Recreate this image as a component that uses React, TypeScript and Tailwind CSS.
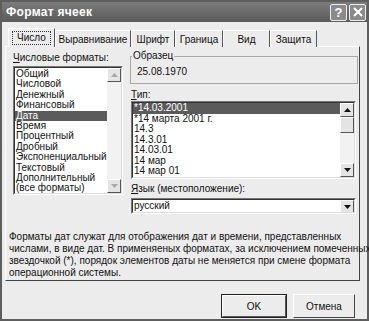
import React from "react";

const formats = [
  "Общий",
  "Числовой",
  "Денежный",
  "Финансовый",
  "Дата",
  "Время",
  "Процентный",
  "Дробный",
  "Экспоненциальный",
  "Текстовый",
  "Дополнительный",
  "(все форматы)",
];

const types = [
  "*14.03.2001",
  "*14 марта 2001 г.",
  "14.3",
  "14.3.01",
  "14.03.01",
  "14 мар",
  "14 мар 01",
];

const tabs = ["Выравнивание", "Шрифт", "Граница", "Вид", "Защита"];
const tabWidths = ["w-[76px]", "w-[44px]", "w-[48px]", "w-[47px]", "w-[47px]"];

// стрелка для полос прокрутки
const Arrow = ({ up, dim }: { up?: boolean; dim?: boolean }) => (
  <svg width="7" height="4" viewBox="0 0 7 4" className={up ? "" : "rotate-180"}>
    <path d="M0 4 L3.5 0 L7 4 Z" fill={dim ? "#a8a8a8" : "#111"} />
  </svg>
);

const ScrollBtn = ({ up, dim }: { up?: boolean; dim?: boolean }) => (
  <div className="h-[14px] w-[14px] shrink-0 flex items-center justify-center bg-[#e4e4e4] border border-t-white border-l-white border-r-[#555] border-b-[#555]">
    <Arrow up={up} dim={dim} />
  </div>
);

const Sunken = ({ className, children }: { className?: string; children?: React.ReactNode }) => (
  <div className={`border border-t-[#777] border-l-[#777] border-r-white border-b-white ${className ?? ""}`}>
    <div className="h-full w-full border border-t-[#333] border-l-[#333] border-r-[#ddd] border-b-[#ddd] bg-white flex overflow-hidden">
      {children}
    </div>
  </div>
);

export default function App() {
  return (
    <div
      className="w-[369px] h-[321px] bg-[#5e5e5e] p-[2px] flex flex-col text-[#111]"
      style={{ fontFamily: '"Liberation Sans", Arial, sans-serif' }}
    >
      {/* заголовок */}
      <div className="h-[20px] shrink-0 flex items-center justify-between pl-[4px] pr-[1px] bg-gradient-to-b from-[#7c7c7c] to-[#5a5a5a]">
        <span className="text-white font-bold text-[12px] tracking-[0.3px]">Формат ячеек</span>
        <div className="flex gap-[2px]">
          <div className="h-[17px] w-[17px] rounded-[2px] border border-[#eee] bg-[#8a8a8a] flex items-center justify-center text-white font-bold text-[13px] leading-none">?</div>
          <div className="h-[17px] w-[17px] rounded-[2px] border border-[#eee] bg-[#8a8a8a] flex items-center justify-center">
            <svg width="10" height="10" viewBox="0 0 10 10">
              <path d="M1 1 L9 9 M9 1 L1 9" stroke="#fff" strokeWidth="2" />
            </svg>
          </div>
        </div>
      </div>

      <div className="flex-1 bg-[#ececec] px-[3px] pt-[6px] flex flex-col">
        {/* вкладки */}
        <div className="flex items-end pl-[3px] h-[19px] relative z-10">
          <div className="h-[19px] w-[47px] bg-[#ececec] border border-b-0 border-t-white border-l-white border-r-[#555] flex items-center justify-center">
            <span className="border border-dotted border-[#333] px-[4px] text-[10px] leading-[12px]">Число</span>
          </div>
          {tabs.map((t, i) => (
            <div
              key={t}
              className={`${tabWidths[i]} h-[17px] bg-[#ececec] border border-b-0 border-t-white border-l-white border-r-[#555] flex items-center justify-center text-[10px]`}
            >
              {t}
            </div>
          ))}
        </div>

        {/* панель */}
        <div className="h-[235px] w-[355px] border border-t-white border-l-white border-r-[#444] border-b-[#444] bg-[#ececec] flex flex-col -mt-px">
          <div className="flex pt-[4px]">
            {/* левая колонка */}
            <div className="ml-[7px] w-[110px] flex flex-col">
              <span className="text-[10px] leading-[13px] h-[15px]">
                <u>Ч</u>исловые форматы:
              </span>
              <Sunken className="h-[129px] w-[110px]">
                <div className="flex-1 flex flex-col pt-px text-[10px] leading-[10.4px]">
                  {formats.map((f) => (
                    <div
                      key={f}
                      className={`pl-[1px] h-[10.4px] whitespace-nowrap ${f === "Дата" ? "bg-[#5b5b5b] text-white" : ""}`}
                    >
                      {f}
                    </div>
                  ))}
                </div>
                <div className="w-[14px] bg-[#f2f2f2] flex flex-col justify-between">
                  <ScrollBtn up dim />
                  <ScrollBtn dim />
                </div>
              </Sunken>
            </div>

            {/* правая колонка */}
            <div className="ml-[7px] w-[228px] flex flex-col">
              <div className="relative border border-[#a8a8a8] h-[28px] mt-[5px] flex items-end pl-[6px] pb-[5px]">
                <span className="absolute -top-[8px] left-[1px] bg-[#ececec] px-[1px] text-[10px] leading-[13px]">Образец</span>
                <span className="text-[10px] leading-[13px]">25.08.1970</span>
              </div>
              <span className="mt-[4px] ml-px text-[10px] leading-[13px] h-[13px]">
                <u>Т</u>ип:
              </span>
              <Sunken className="h-[78px] w-[225px] ml-px">
                <div className="flex-1 flex flex-col text-[10px] leading-[10.5px]">
                  {types.map((t, i) => (
                    <div
                      key={t}
                      className={`pl-[1px] h-[10.5px] whitespace-nowrap ${i === 0 ? "bg-[#5b5b5b] text-white" : ""}`}
                    >
                      {t}
                    </div>
                  ))}
                </div>
                <div className="w-[14px] bg-[#f2f2f2] flex flex-col">
                  <ScrollBtn up />
                  <div className="h-[16px] w-[14px] bg-[#e4e4e4] border border-t-white border-l-white border-r-[#555] border-b-[#555]" />
                  <div className="flex-1" />
                  <ScrollBtn />
                </div>
              </Sunken>
              <span className="mt-[3px] ml-px text-[10px] leading-[13px] h-[16px]">
                <u>Я</u>зык (местоположение):
              </span>
              <Sunken className="h-[16px] w-[225px] ml-px">
                <div className="flex-1 text-[10px] leading-[12px] pl-[1px]">русский</div>
                <ScrollBtn />
              </Sunken>
            </div>
          </div>

          <p className="mt-[17px] ml-[3px] text-[10px] leading-[12px] whitespace-nowrap">
            Форматы дат служат для отображения дат и времени, представленных
            <br />
            числами, в виде дат. В применяеных форматах, за исключением помеченных
            <br />
            звездочкой (*), порядок элементов даты не меняется при смене формата
            <br />
            операционной системы.
          </p>
        </div>

        {/* кнопки */}
        <div className="flex justify-end gap-[6px] pr-[9px] mt-[13px]">
          <div className="h-[24px] w-[66px] border border-[#222] flex">
            <div className="flex-1 border border-t-white border-l-white border-r-[#555] border-b-[#555] flex items-center justify-center text-[10px]">
              OK
            </div>
          </div>
          <div className="h-[24px] w-[62px] border border-t-white border-l-white border-r-[#444] border-b-[#444] flex items-center justify-center text-[10px]">
            Отмена
          </div>
        </div>
      </div>
    </div>
  );
}
